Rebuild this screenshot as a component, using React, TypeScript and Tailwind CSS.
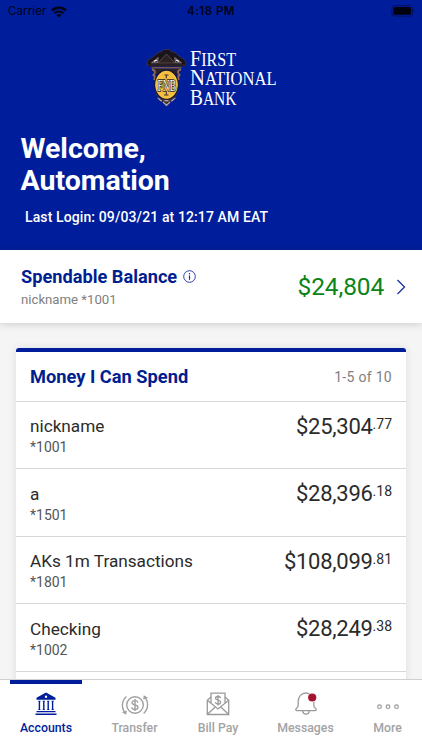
import React from "react";

const accounts = [
  { name: "nickname", number: "*1001", whole: "$25,304", cents: ".77" },
  { name: "a", number: "*1501", whole: "$28,396", cents: ".18" },
  { name: "AKs 1m Transactions", number: "*1801", whole: "$108,099", cents: ".81" },
  { name: "Checking", number: "*1002", whole: "$28,249", cents: ".38" },
];

function WifiIcon() {
  return (
    <svg width="16" height="12" viewBox="0 0 16 12" fill="none" stroke="#000314" strokeWidth="2.2">
      <path d="M1 4.400a10 10 0 0 1 14 0" />
      <path d="M3.600 7.300a6.300 6.300 0 0 1 8.800 0" />
      <path d="M8 11.600 5.500 9.200a3.600 3.600 0 0 1 5 0Z" fill="#000314" stroke="none" />
    </svg>
  );
}

function BatteryIcon() {
  return (
    <svg width="24" height="12" viewBox="0 0 24 12">
      <rect x="0.7" y="0.6" width="21" height="10.600" rx="3" fill="none" stroke="#001263" />
      <rect x="2.200" y="2.100" width="18" height="7.600" rx="1.800" fill="#000210" />
      <path d="M22.700 4.200c1 .4 1 3 0 3.400Z" fill="#001263" />
    </svg>
  );
}

function BankLogo() {
  return (
    <svg width="132" height="62" viewBox="146 47 132 62">
      {/* pediment */}
      <path
        d="M147 65v-3c1-3 4-3.500 6.500-5.500 2-1.500 3.500-3.500 6-4.500l2.500-.5 1.500-2h6l1.500 2 2.500.5c2.500 1 4 3 6 4.500 2.500 2 5.500 2.500 6.500 5.500v3Z"
        fill="#19141b"
        stroke="#4c3d46"
        strokeWidth=".6"
      />
      <path d="m158 63 8.500-9 8.500 9Z" fill="#2b2025" stroke="#685448" strokeWidth=".8" />
      <path d="m151.500 62.800 6.800-5.300-.8 5.300ZM181.500 62.800l-6.800-5.300.8 5.300Z" fill="#1a1e62" stroke="#b7a184" strokeWidth=".7" />
      <path d="m154 61.300 3.200-1.300M179 61.300l-3.200-1.300" stroke="#fff7dc" strokeWidth="1.300" />
      <path d="M148 65.500h37" stroke="#2a1e22" strokeWidth="1.800" />
      <path d="M151.500 67.700h30" stroke="#765744" strokeWidth="1.600" />
      {/* scrolls and medallion */}
      <path d="M152 69h29l-2.500 5h-24Z" fill="#2a2025" />
      <path d="M152 69.500c3.500.5 4 3 1.500 5.500 1.500 1 1.500 3 .5 5M181 69.500c-3.500.5-4 3-1.500 5.500-1.500 1-1.500 3-.5 5" fill="none" stroke="#936b55" strokeWidth="1.800" />
      <path d="M155 90c0 5 4 7 6 10l5.500 6 5.500-6c2-3 6-5 6-10Z" fill="#433538" />
      <ellipse cx="166.500" cy="84.800" rx="12.300" ry="15" fill="#19141b" />
      <ellipse cx="166.500" cy="84.800" rx="11" ry="13.700" fill="#f5be3d" stroke="#ffda75" strokeWidth=".6" />
      <path d="M157.500 98c2 0 2 3 4.500 3M175.500 98c-2 0-2 3-4.500 3M163 102l3.500 3.500 3.500-3.500M164.500 100.700h4" fill="none" stroke="#c0aaa0" strokeWidth="1.200" />
      <text
        x="157.500"
        y="90.500"
        fontFamily="'Liberation Serif', serif"
        fontSize="17"
        textLength="18.500"
        lengthAdjust="spacingAndGlyphs"
        fill="#fff6e6"
        stroke="#241c22"
        strokeWidth="1.600"
        paintOrder="stroke"
      >
        FNB
      </text>
      <path d="M166.300 74.500v4M164.500 75h4M166.300 91v4M164 95h4.500" stroke="#40343a" strokeWidth="1.100" />
      <g fontFamily="'Liberation Serif', serif" fill="#fff" fontSize="22.500">
        <text x="190" y="65.800" textLength="46" lengthAdjust="spacingAndGlyphs">F<tspan fontSize="18">IRST</tspan></text>
        <text x="190" y="85" textLength="86.500" lengthAdjust="spacingAndGlyphs">N<tspan fontSize="18">ATIONAL</tspan></text>
        <text x="190" y="104.500" textLength="46.500" lengthAdjust="spacingAndGlyphs">B<tspan fontSize="18">ANK</tspan></text>
      </g>
    </svg>
  );
}

function InfoIcon() {
  return (
    <svg width="13" height="13" viewBox="0 0 13 13" fill="none" stroke="#1a2f9e" strokeWidth="0.9">
      <circle cx="6.500" cy="6.500" r="5.800" />
      <path d="M6.500 5.500v4.300" strokeWidth="1.200" />
      <path d="M6.500 3.100v1.300" strokeWidth="1.200" />
    </svg>
  );
}

function AccountsIcon() {
  return (
    <svg width="22" height="24" viewBox="0 0 22 24" fill="#001e9b">
      <path fillRule="evenodd" d="M11 .6 20.500 5.800v1.900h-19V5.800Zm0 2.900a1.200 1.200 0 1 0 0 2.400 1.200 1.200 0 0 0 0-2.400Z" />
      <path d="M3.200 8.800h2.300v.8h-.4v7.600h.4v.8H3.200v-.8h.5V9.600h-.5ZM7.600 8.800h2.300v.8h-.4v7.600h.4v.8H7.600v-.8h.5V9.600h-.5ZM12.100 8.800h2.300v.8h-.5v7.600h.5v.8h-2.300v-.8h.4V9.600h-.4ZM16.500 8.800h2.300v.8h-.5v7.600h.5v.8h-2.300v-.8h.4V9.600h-.4Z" />
      <path d="M1.500 19h19v1.200h-19ZM.5 21.600h21v1.400H.5Z" />
    </svg>
  );
}

function TransferIcon() {
  return (
    <svg width="28" height="24" viewBox="0 0 28 24" fill="none" stroke="#a0a0a0" strokeWidth="1.400">
      <circle cx="14" cy="13" r="8.300" />
      <path d="M17 10.500c-.3-1.200-1.400-1.900-3-1.900s-2.900.8-2.900 2.100c0 3 5.900 1.500 5.900 4.500 0 1.300-1.300 2.200-3 2.200s-3-.8-3.200-2.100M14 7v12" />
      <path d="M5.400 4.600C.2 9.200.2 17 4.800 21.600M22.600 21.400c5.200-4.600 5.200-12.400.6-17" />
      <path d="m1 20.300 4.800-1.700-.6 4.200ZM27 5.700l-4.800 1.700.6-4.200Z" fill="#a0a0a0" stroke="none" />
    </svg>
  );
}

function BillIcon() {
  return (
    <svg width="24" height="24" viewBox="0 0 24 24" fill="none" stroke="#9a9a9a" strokeWidth="1.300">
      <path d="M5 5 1.300 8.300v14.200h21.400V8.300L19 5" />
      <path d="M5 11.300V1.200h14v10.100M1.300 8.300 12 17l10.700-8.700M1.500 22.300l8-7.500M22.500 22.300l-8-7.500" />
      <path d="M14.600 6.200c-.2-1.200-1.200-1.700-2.600-1.700s-2.500.7-2.500 1.800c0 2.600 5.100 1.200 5.100 3.900 0 1.200-1.200 1.900-2.600 1.900s-2.500-.8-2.700-1.900M12 3v10.600" />
    </svg>
  );
}

function BellIcon() {
  return (
    <svg width="24" height="24" viewBox="0 0 24 24" fill="none" stroke="#9a9a9a" strokeWidth="1.300">
      <path d="M4.200 13V9.200C4.200 4.500 7.500 1 12 1s7.800 3.500 7.800 8.200V13c0 2 .6 2.700 1.800 3.600.9.700.8 2-.5 2H2.900c-1.300 0-1.400-1.300-.5-2C3.600 15.700 4.200 15 4.200 13Z" />
      <path d="M8.800 18.800c0 4.400 6.400 4.400 6.400 0" />
      <circle cx="18.200" cy="5.500" r="4.800" fill="#fff" stroke="none" />
      <circle cx="18.200" cy="5.500" r="4.100" fill="#a3122f" stroke="none" />
    </svg>
  );
}

function MoreIcon() {
  return (
    <svg width="24" height="24" viewBox="0 0 24 24" fill="none" stroke="#9a9a9a" strokeWidth="1.200">
      <circle cx="3.500" cy="14.700" r="1.800" />
      <circle cx="12" cy="14.700" r="1.800" />
      <circle cx="20.500" cy="14.700" r="1.800" />
    </svg>
  );
}

const tabs = [
  { label: "Accounts", icon: <AccountsIcon />, box: "ml-[10px] w-[72px]" },
  { label: "Transfer", icon: <TransferIcon />, box: "ml-[16px] w-[73px]" },
  { label: "Bill Pay", icon: <BillIcon />, box: "ml-[14px] w-[66px]" },
  { label: "Messages", icon: <BellIcon />, box: "ml-[14px] w-[81px]" },
  { label: "More", icon: <MoreIcon />, box: "ml-[15px] w-[53px]" },
];

export default function App() {
  return (
    <div className="flex h-[750px] w-[422px] flex-col overflow-hidden bg-[#f5f5f5] font-[Roboto,sans-serif]">
      <header className="h-[250px] shrink-0 bg-[#001e9b] text-white">
        <div className="grid h-[22px] grid-cols-3 items-center px-2 font-[Inter,sans-serif] text-[#000314]">
          <div className="flex items-center gap-[5px] pt-px text-[11.5px] tracking-[0.1px]">
            Carrier
            <WifiIcon />
          </div>
          <div className="pt-px text-center text-[11.5px] font-semibold tracking-[0.5px]">4:18 PM</div>
          <div className="-mr-[1px] flex justify-end">
            <BatteryIcon />
          </div>
        </div>
        <div className="mt-[25px] flex h-[62px] justify-center pl-[2px]">
          <BankLogo />
        </div>
        <h1 className="mt-[24px] pl-[20.500px] text-[28.500px] leading-[32px] font-bold tracking-[-0.020px]">
          Welcome,
          <br />
          Automation
        </h1>
        <p className="mt-[9.500px] pl-[25px] text-[14px] leading-5 font-medium tracking-[0.110px]">Last Login: 09/03/21 at 12:17 AM EAT</p>
      </header>

      <section className="flex h-[73px] shrink-0 items-center bg-white pr-[15px] pl-[21px] shadow-[0_1px_8px_rgba(0,0,0,0.18)]">
        <div className="flex-1">
          <h2 className="flex items-center gap-[6px] pt-[2px] text-[18.200px] leading-[24px] font-bold text-[#001e8f]">
            Spendable Balance
            <InfoIcon />
          </h2>
          <p className="text-[13.200px] leading-[22px] text-[#808080]">nickname *1001</p>
        </div>
        <div className="text-[24.500px] leading-8 tracking-[-0.150px] text-[#0b8419]">$24,804</div>
        <svg className="ml-[12px]" width="11" height="16" viewBox="0 0 11 16" fill="none" stroke="#1b309f" strokeWidth="1.300">
          <path d="m1.500 1 7 7-7 7" />
        </svg>
      </section>

      <main className="flex min-h-0 flex-1 flex-col overflow-hidden px-[16.300px] pt-[25.400px]">
        <div className="h-[400px] shrink-0 rounded-t-[3px] border-t-4 border-[#001e9b] bg-white shadow-[0_0_9px_rgba(0,0,0,0.1)]">
          <div className="flex h-[49.500px] items-center justify-between border-b border-[#d8d8d8] px-[13.700px]">
            <h2 className="text-[18.250px] font-bold text-[#001e8f]">Money I Can Spend</h2>
            <span className="pt-px text-[14px] tracking-[0.300px] text-[#808080]">1-5 of 10</span>
          </div>
          {accounts.map((account) => (
            <div key={account.number} className="flex h-[67.500px] justify-between border-b border-[#d8d8d8] px-[13.700px] pt-[12.300px]">
              <div>
                <div className="text-[17.200px] leading-6 text-[#2b2b2b]">{account.name}</div>
                <div className="text-[14px] leading-[18px] text-[#555]">{account.number}</div>
              </div>
              <div className="flex pt-[0.700px] text-[#2b2b2b]">
                <span className="text-[22px] leading-6 tracking-[-0.280px]">{account.whole}</span>
                <span className="text-[14px] leading-[18px]">{account.cents}</span>
              </div>
            </div>
          ))}
        </div>
      </main>

      <nav className="flex h-[71px] shrink-0 border-t border-[#d0d0d0] bg-white">
        {tabs.map((tab, index) => (
          <div
            key={tab.label}
            className={
              "flex shrink-0 flex-col items-center border-t-4 text-[12.300px] font-medium " +
              tab.box +
              (index === 0 ? " border-[#001e9b] text-[#001e9b]" : " border-transparent text-[#a3a3a3]")
            }
          >
            <div className="mt-[7.500px] flex h-[24px]">{tab.icon}</div>
            <span className="mt-[4px] leading-4">{tab.label}</span>
          </div>
        ))}
      </nav>
    </div>
  );
}
